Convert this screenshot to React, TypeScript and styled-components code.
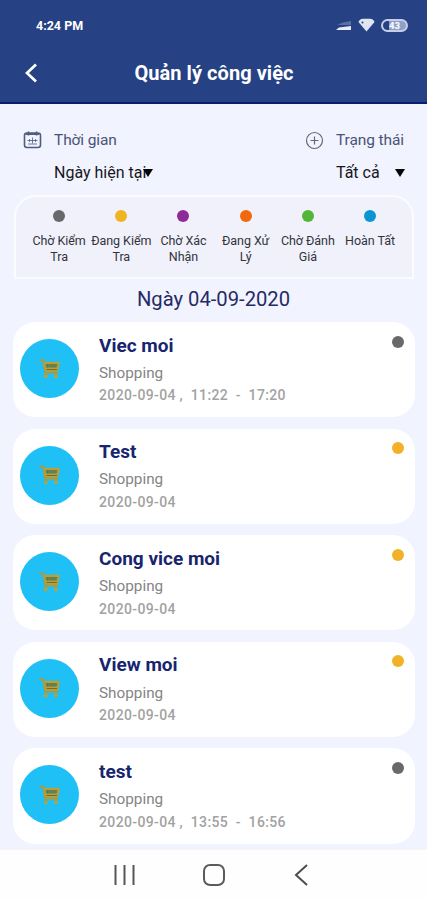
import React from "react";
import styled, { createGlobalStyle } from "styled-components";

const GlobalStyle = createGlobalStyle`
  * { box-sizing: border-box; }
  body { margin: 0; background: #f1f4fe; font-family: Roboto, "Noto Sans", sans-serif; }
`;

const Screen = styled.div`
  width: 427px;
  height: 900px;
  display: flex;
  flex-direction: column;
  overflow: hidden;
  background: #f1f4fe;
`;

const Header = styled.header`
  height: 104px;
  flex: none;
  background: #264284;
  border-bottom: 2px solid #0b1c70;
  color: #fff;
`;

const StatusBar = styled.div`
  height: 50px;
  padding: 0 19px 0 36px;
  display: flex;
  align-items: center;
  justify-content: space-between;
`;

const Clock = styled.span`
  font-size: 12.5px;
  font-weight: 700;
  line-height: 16px;
  padding-top: 2px;
`;

const StatusIcons = styled.div`
  display: flex;
  align-items: center;
  gap: 6px;
`;

const Battery = styled.span`
  width: 27px;
  height: 13px;
  border: 2px solid #c5cfe4;
  border-radius: 7px;
  background: linear-gradient(90deg, #264284 28%, #8fa0c8 28%);
  display: flex;
  align-items: center;
  justify-content: center;
  font-size: 9.5px;
  font-weight: 900;
  line-height: 9px;
  color: #f4f7fd;
`;

const TitleBar = styled.div`
  height: 46px;
  display: grid;
  grid-template-columns: 60px 1fr 60px;
  align-items: center;
`;

const BackButton = styled.button`
  border: 0;
  background: none;
  padding: 0 0 0 24px;
  display: flex;
`;

const Title = styled.h1`
  margin: 0;
  padding-left: 1px;
  font-size: 20px;
  font-weight: 700;
  line-height: 24px;
  letter-spacing: 0.05px;
  text-align: center;
  white-space: nowrap;
`;

const Filters = styled.section`
  height: 91px;
  padding: 26px 22px 0 23px;
  display: flex;
  justify-content: space-between;
`;

const Filter = styled.div<{ $width: number }>`
  width: ${(p) => p.$width}px;
  display: grid;
  grid-template-columns: 19px 1fr;
  grid-template-rows: 20px 20px;
  column-gap: 12px;
  row-gap: 13px;
  align-items: center;
`;

const FilterLabel = styled.span`
  font-size: 15.5px;
  line-height: 20px;
  letter-spacing: -0.1px;
  color: #4b5375;
  white-space: nowrap;
`;

const FilterValue = styled.div`
  grid-column: 2;
  display: flex;
  align-items: center;
  justify-content: space-between;
  font-size: 16px;
  line-height: 20px;
  color: #16171c;
  white-space: nowrap;
`;

const Caret = styled.span<{ $overlap?: number }>`
  width: 0;
  height: 0;
  margin-left: -${(p) => p.$overlap ?? 0}px;
  border: 5px solid transparent;
  border-top: 8px solid #050506;
  border-bottom: 0;
`;

const Legend = styled.section`
  height: 84px;
  flex: none;
  margin: 0 13px 0 14px;
  padding: 13px 11px 0 12px;
  border: 2px solid #fbfcff;
  border-radius: 22px 22px 0 0;
  background: #f0f1fa;
  display: grid;
  grid-template-columns: repeat(6, 62.2px);
`;

const LegendItem = styled.div`
  display: flex;
  flex-direction: column;
  align-items: center;
  gap: 11px;
`;

const Dot = styled.span<{ $color: string }>`
  flex: none;
  width: 12px;
  height: 12px;
  border-radius: 50%;
  background: ${(p) => p.$color};
`;

const LegendText = styled.span`
  font-size: 12.5px;
  line-height: 15.5px;
  letter-spacing: -0.05px;
  text-align: center;
  white-space: pre;
  color: #33343b;
`;

const DateHeading = styled.h2`
  height: 43px;
  flex: none;
  margin: 0;
  font-size: 20.2px;
  font-weight: 400;
  line-height: 41px;
  text-align: center;
  color: #272966;
`;

const TaskList = styled.main`
  height: 527px;
  flex: none;
  padding: 0 12px 0 13px;
  display: flex;
  flex-direction: column;
  gap: 11.3px;
`;

const Card = styled.article`
  height: 95.3px;
  flex: none;
  padding: 0 11px 0 7px;
  border-radius: 22px;
  background: #fff;
  display: flex;
`;

const Avatar = styled.div`
  width: 59px;
  height: 59px;
  margin-top: 17px;
  border-radius: 50%;
  background: #1ec0f5;
  display: flex;
  align-items: center;
  justify-content: center;
`;

const Info = styled.div`
  flex: 1;
  padding: 11.5px 0 0 20px;
`;

const TaskName = styled.h3`
  margin: 0;
  font-size: 19px;
  font-weight: 700;
  line-height: 23px;
  color: #17256e;
`;

const Category = styled.p`
  margin: 6.300px 0 0;
  font-size: 15.3px;
  line-height: 21px;
  color: #858585;
`;

const Time = styled.p`
  margin: 1.700px 0 0;
  font-size: 14px;
  font-weight: 500;
  line-height: 20px;
  letter-spacing: 0.36px;
  color: #a2a2a2;
  white-space: pre;
`;

const DotSlot = styled.div`
  padding-top: 13.5px;
`;

const NavBar = styled.nav`
  flex: 1;
  background: #fefefe;
  border-top: 1px solid #f6f6f8;
  padding: 0 119px 0 112px;
  display: grid;
  grid-template-columns: 90px 1fr 14px;
  align-items: center;
`;

const legend = [
  { color: "#69696b", text: "Chờ Kiểm\nTra" },
  { color: "#f0b420", text: "Đang Kiểm\nTra" },
  { color: "#8e2b99", text: "Chờ Xác\nNhận" },
  { color: "#f4680d", text: "Đang Xử\nLý" },
  { color: "#52b738", text: "Chờ Đánh\nGiá" },
  { color: "#0b96d2", text: "Hoàn Tất" },
];

const GREY = "#69696b";
const AMBER = "#f2b227";

const tasks = [
  { name: "Viec moi", time: "2020-09-04 ,  11:22  -  17:20", color: GREY },
  { name: "Test", time: "2020-09-04", color: AMBER },
  { name: "Cong vice moi", time: "2020-09-04", color: AMBER },
  { name: "View moi", time: "2020-09-04", color: AMBER },
  { name: "test", time: "2020-09-04 ,  13:55  -  16:56", color: GREY },
];

const SignalIcon = () => (
  <svg width="16" height="12" viewBox="0 0 16 12">
    <path d="M1 6 7 3.500 15 2V6Z" fill="#5a70a3" />
    <path d="M0 11 3 8.500 15 7V11Z" fill="#e8edf8" />
  </svg>
);

const WifiIcon = () => (
  <svg width="17" height="14" viewBox="0 0 17 14">
    <path d="M.5 4Q2 .8 5 .8H12Q15 .8 16.500 4L8.500 13.500Z" fill="#dfe5f3" />
    <circle cx="4.500" cy="4.500" r="1" fill="#264284" />
  </svg>
);

const ChevronIcon = () => (
  <svg width="14" height="20" viewBox="0 0 14 20" fill="none" stroke="#fff" strokeWidth="2.700">
    <path d="m12 1.500-9 8.500 9 8.500" />
  </svg>
);

const CalendarIcon = () => (
  <svg width="19" height="18" viewBox="0 0 19 18" fill="none" stroke="#515c7e" strokeWidth="1.600">
    <rect x="1.500" y="2" width="16" height="14.500" rx="2.500" />
    <path d="M3 3h13" strokeWidth="2" />
    <path d="M5.500.5v4M13.500.5v4" />
    <path d="M4.500 9.500h10M9.500 6.500v6M6.500 8v3M12.500 8v3M5 13h9" strokeWidth=".8" />
  </svg>
);

const PlusCircleIcon = () => (
  <svg width="19" height="19" viewBox="0 0 19 19" fill="none" stroke="#646873" strokeWidth="1.200">
    <circle cx="9.500" cy="9.500" r="8" />
    <path d="M5.500 9.500h8M9.500 5.500v8" />
  </svg>
);

const CartIcon = () => (
  <svg width="22" height="20" viewBox="0 0 22 20" fill="none">
    <path
      d="M1.500 1 4.500 2 6.500 13.500H18.500"
      stroke="#a99a3e"
      strokeWidth="2.200"
      strokeLinejoin="round"
      strokeLinecap="round"
    />
    <path d="M4.500 2.800H21L19 12.500H6.500Z" fill="#b9a03a" />
    <path d="M6.500 5H18.500L17.800 8.500H7Z" fill="#5f875e" />
    <path d="M8.500 5v3.500M11 5v3.500M13.500 5v3.500M16 5v3.500" stroke="#776d32" strokeWidth=".8" />
    <path d="M7.500 10.500H18" stroke="#7a6823" />
    <path d="M6.500 14v2M16.500 14v2" stroke="#a99a3e" strokeWidth="2" />
    <circle cx="6.800" cy="17.400" r="1.900" fill="#b5a243" />
    <circle cx="16.800" cy="17.400" r="1.900" fill="#b5a243" />
  </svg>
);

const RecentsIcon = () => (
  <svg width="24" height="22" viewBox="0 0 24 22" stroke="#555" strokeWidth="2">
    <path d="M3.500 1v20M12.500 1v20M21.500 1v20" />
  </svg>
);

const HomeIcon = () => (
  <svg width="24" height="24" viewBox="0 0 24 24" fill="none" stroke="#5b5b5b" strokeWidth="2">
    <rect x="2" y="2" width="20" height="20" rx="6" />
  </svg>
);

const NavBackIcon = () => (
  <svg width="14" height="22" viewBox="0 0 14 22" fill="none" stroke="#4c4c4c" strokeWidth="2">
    <path d="M13 1 2 11l11 10" />
  </svg>
);

export default function App() {
  return (
    <>
      <GlobalStyle />
      <Screen>
        <Header>
          <StatusBar>
            <Clock>4:24 PM</Clock>
            <StatusIcons>
              <SignalIcon />
              <WifiIcon />
              <Battery>43</Battery>
            </StatusIcons>
          </StatusBar>
          <TitleBar>
            <BackButton aria-label="Back">
              <ChevronIcon />
            </BackButton>
            <Title>Quản lý công việc</Title>
          </TitleBar>
        </Header>
        <Filters>
          <Filter $width={130}>
            <CalendarIcon />
            <FilterLabel>Thời gian</FilterLabel>
            <FilterValue>
              Ngày hiện tại
              <Caret $overlap={6} />
            </FilterValue>
          </Filter>
          <Filter $width={100}>
            <PlusCircleIcon />
            <FilterLabel>Trạng thái</FilterLabel>
            <FilterValue>
              Tất cả
              <Caret />
            </FilterValue>
          </Filter>
        </Filters>
        <Legend>
          {legend.map((item) => (
            <LegendItem key={item.text}>
              <Dot $color={item.color} />
              <LegendText>{item.text}</LegendText>
            </LegendItem>
          ))}
        </Legend>
        <DateHeading>Ngày 04-09-2020</DateHeading>
        <TaskList>
          {tasks.map((task) => (
            <Card key={task.name}>
              <Avatar>
                <CartIcon />
              </Avatar>
              <Info>
                <TaskName>{task.name}</TaskName>
                <Category>Shopping</Category>
                <Time>{task.time}</Time>
              </Info>
              <DotSlot>
                <Dot as="div" $color={task.color} />
              </DotSlot>
            </Card>
          ))}
        </TaskList>
        <NavBar>
          <RecentsIcon />
          <HomeIcon />
          <NavBackIcon />
        </NavBar>
      </Screen>
    </>
  );
}
